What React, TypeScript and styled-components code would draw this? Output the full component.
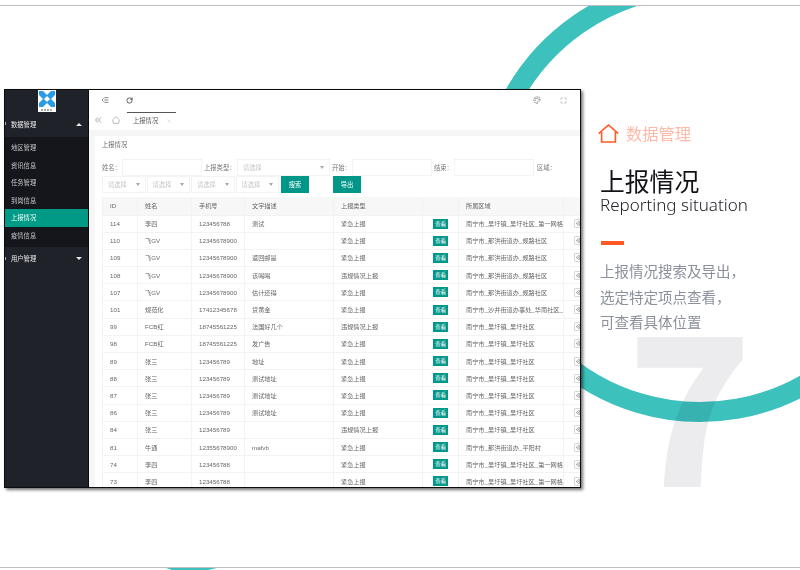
import React from "react";
import styled, { createGlobalStyle } from "styled-components";
import { ChevronsLeft, Eye, IndentDecrease, Maximize, Palette, RotateCw, X } from "lucide-react";

const Global = createGlobalStyle`
  html, body { margin: 0; padding: 0; background: #fff; }
  body { font-family: "Liberation Sans", "Noto Sans CJK SC", sans-serif; }
  * { box-sizing: border-box; }
`;

const Page = styled.div`
  width: 800px;
  height: 570px;
  overflow: hidden;
  padding-top: 5px;
`;

const Section = styled.section`
  position: relative;
  height: 563px;
  overflow: hidden;
  border-top: 1px solid #bdbdbd;
  border-bottom: 1px solid #bdbdbd;
  display: flex;
  align-items: flex-start;
`;

const Ring = styled.svg`
  position: absolute;
  left: 0;
  top: 0;
`;

const Seven = styled.div`
  position: absolute;
  left: 627px;
  top: 341px;
  font: 800 206px/100px "Noto Sans CJK SC", sans-serif;
  color: #ececef;
  mix-blend-mode: multiply;
`;

const Peek = styled.svg`
  display: block;
  margin-left: 166px;
`;

const Shot = styled.div`
  position: relative;
  flex: none;
  width: 577px;
  height: 399px;
  margin: 83px 0 0 4px;
  display: flex;
  overflow: hidden;
  border: 1px solid #0c0c0c;
  background: #fff;
  box-shadow: 2px 2px 3px rgba(0, 0, 0, 0.55);
  filter: blur(0.3px);
`;

const Sidebar = styled.aside`
  flex: none;
  width: 84px;
  background: #20222a;
  border-right: 1px solid #0a0a0a;
  font-size: 6.3px;
  color: #c9cacd;
`;

const LogoBox = styled.div`
  display: flex;
  justify-content: center;
  height: 24px;
  padding-left: 1px;
`;

const GroupRow = styled.div<{ $open?: boolean }>`
  position: relative;
  height: 23px;
  display: flex;
  align-items: center;
  justify-content: space-between;
  padding: 0 6px 0 6px;
  padding-bottom: ${(p) => (p.$open ? "3px" : "0")};
  color: #e9eaec;
  &::before {
    content: "";
    position: absolute;
    left: 0;
    top: ${(p) => (p.$open ? "8px" : "10px")};
    width: 1px;
    height: 3px;
    background: #aaa;
  }
`;

const Caret = styled.i<{ $up?: boolean }>`
  width: 0;
  height: 0;
  border-left: 3px solid transparent;
  border-right: 3px solid transparent;
  border-bottom: ${(p) => (p.$up ? "3px solid #e8e8e8" : "none")};
  border-top: ${(p) => (p.$up ? "none" : "3px solid #e8e8e8")};
`;

const SubMenu = styled.div`
  background: #15161b;
  padding: 2px 0;
`;

const SubItem = styled.div<{ $active?: boolean }>`
  height: 17.6px;
  line-height: 17.6px;
  padding-left: 6px;
  background: ${(p) => (p.$active ? "#009a86" : "transparent")};
  color: ${(p) => (p.$active ? "#fff" : "#c4c5c9")};
`;

const Main = styled.main`
  flex: 1;
  min-width: 0;
  display: flex;
  flex-direction: column;
  font-size: 6.3px;
  color: #666;
`;

const TopBar = styled.div`
  flex: none;
  height: 20px;
  display: flex;
  align-items: center;
  padding: 0 13px 0 12px;
  gap: 17px;
  color: #222;
`;

const TopRight = styled.div`
  margin-left: auto;
  display: flex;
  align-items: center;
  gap: 19px;
  color: #777;
`;

const TabBar = styled.div`
  flex: none;
  height: 20px;
  display: flex;
  align-items: center;
  color: #999;
`;

const TabIcon = styled.div<{ $dark?: boolean }>`
  width: 18px;
  display: flex;
  justify-content: center;
  color: ${(p) => (p.$dark ? "#555" : "#aaa")};
`;

const Tab = styled.div`
  height: 18px;
  width: 49px;
  margin: 2px 0 0 2px;
  padding: 0 4px 2px 6px;
  border-top: 1px solid #555;
  display: flex;
  align-items: center;
  justify-content: space-between;
  color: #555;
`;

const Body = styled.div`
  flex: 1;
  min-height: 0;
  background: #f6f6f6;
  padding: 6px 0 0 6px;
`;

const Card = styled.div`
  height: 100%;
  background: #fff;
  padding: 0 0 0 7px;
  overflow: hidden;
`;

const CardTitle = styled.div`
  height: 23px;
  padding: 4px 0 0 0;
  line-height: 10px;
  color: #666;
`;

const FilterRow = styled.div`
  display: flex;
  align-items: center;
  height: 17px;
  color: #777;
`;

const Label = styled.span<{ $w: number; $pad?: number }>`
  width: ${(p) => p.$w}px;
  padding-left: ${(p) => p.$pad ?? 0}px;
  flex: none;
  white-space: nowrap;
`;

const Input = styled.div<{ $w: number }>`
  flex: none;
  width: ${(p) => p.$w}px;
  height: 17px;
  border: 1px solid #f3f3f3;
  background: #fff;
`;

const Select = styled.div<{ $w: number; $gap?: number }>`
  flex: none;
  width: ${(p) => p.$w}px;
  height: 17px;
  margin-left: ${(p) => p.$gap ?? 0}px;
  border: 1px solid #f3f3f3;
  display: flex;
  align-items: center;
  justify-content: space-between;
  padding: 0 5px;
  color: #c6c6c6;
  &::after {
    content: "";
    border-left: 2.5px solid transparent;
    border-right: 2.5px solid transparent;
    border-top: 3px solid #a8a8a8;
  }
`;

const ActionButton = styled.div<{ $gap: number }>`
  flex: none;
  width: 28px;
  height: 17px;
  margin-left: ${(p) => p.$gap}px;
  background: #009688;
  color: #fff;
  display: flex;
  align-items: center;
  justify-content: center;
`;

const Table = styled.table`
  margin-top: 4px;
  table-layout: fixed;
  width: 488px;
  border-collapse: collapse;
  font-size: 6.2px;
  color: #666;
`;

const HeadCell = styled.th`
  height: 18px;
  padding: 0 0 0 7px;
  text-align: left;
  font-weight: 400;
  background: #f7f7f7;
  border: 1px solid #f2f2f2;
  border-top: none;
  white-space: nowrap;
`;

const Cell = styled.td`
  height: 17.2px;
  padding: 0 0 0 7px;
  border: 1px solid #f3f3f3;
  white-space: nowrap;
  overflow: hidden;
`;

const TagCell = styled(Cell)`
  padding: 0;
  text-align: center;
`;

const EyeCell = styled(Cell)`
  padding: 0 0 0 10px;
  border-left-color: #e6e6e6;
`;

const ViewTag = styled.span`
  display: inline-block;
  width: 15px;
  height: 10px;
  line-height: 10px;
  background: #009688;
  color: #fff;
  font-size: 5.6px;
  text-align: center;
  vertical-align: middle;
`;

const EyeBox = styled.span`
  display: inline-flex;
  align-items: center;
  padding-left: 1px;
  width: 16px;
  height: 9px;
  border: 1px solid #d8d8d8;
  border-radius: 1px;
  color: #555;
  vertical-align: middle;
`;

const Side = styled.div`
  position: relative;
  flex: 1;
  padding: 116px 0 0 19px;
`;

const Eyebrow = styled.div`
  display: flex;
  align-items: center;
  gap: 7px;
  height: 22px;
  margin-left: -2px;
  color: #ffb9a8;
  font: 400 16.25px/22px "Noto Sans CJK SC", sans-serif;
`;

const Title = styled.h1`
  margin: 22px 0 0;
  font: 400 24.8px/28px "Noto Sans CJK SC", sans-serif;
  color: #111317;
`;

const Subtitle = styled.div`
  margin-top: 2px;
  font: 300 17px/18px "Noto Sans", sans-serif;
  color: #212328;
  white-space: nowrap;
`;

const Bar = styled.div`
  width: 23px;
  height: 4px;
  margin: 27px 0 0 1px;
  background: #ff5a26;
`;

const Para = styled.p`
  margin: 13px 0 0;
  font: 400 14.5px/25.5px "Noto Sans CJK SC", sans-serif;
  color: #8b909c;
  white-space: nowrap;
`;

type Row = [string, string, string, string, string, string];
const WY = "南宁市_吴圩镇_吴圩社区";
const WYG = "南宁市_吴圩镇_吴圩社区_第一网格";
const NH = "南宁市_那洪街道办_规路社区";
const U = "紧急上报";
const V = "违规情况上报";
const rows: Row[] = [
  ["114", "李四", "123456788", "测试", U, WYG],
  ["110", "飞GV", "12345678900", "", U, NH],
  ["109", "飞GV", "12345678900", "返回邮是", U, NH],
  ["108", "飞GV", "12345678900", "该喝喝", V, NH],
  ["107", "飞GV", "12345678900", "估计还得", U, NH],
  ["101", "规范化", "17412345678", "贷黄金", U, "南宁市_沙井街道办事处_华南社区_第"],
  ["99", "FCB红", "18745561225", "法国好几个", V, WY],
  ["98", "FCB红", "18745561225", "发广告", U, WY],
  ["89", "张三", "123456789", "地址", U, WY],
  ["88", "张三", "123456789", "测试地址", U, WY],
  ["87", "张三", "123456789", "测试地址", U, WY],
  ["86", "张三", "123456789", "测试地址", U, WY],
  ["84", "张三", "123456789", "", V, WY],
  ["81", "牛通", "12355678900", "mafvb", U, "南宁市_那洪街道办_平阳村"],
  ["74", "李四", "123456788", "", U, WYG],
  ["73", "李四", "123456788", "", U, WYG],
];
const cols = [35, 54, 53, 89, 89, 36, 105, 27];
const heads = ["ID", "姓名", "手机号", "文字描述", "上报类型", "", "所属区域", ""];

const Logo = () => (
  <svg width="18" height="22" viewBox="0 0 18 22">
    <rect width="18" height="22" fill="#fff" />
    <path d="M1 1h4l4 4 4-4h4v4l-4 4 4 4v4h-4l-4-4-4 4H1v-4l4-4-4-4z" fill="#2c9be6" />
    <path d="M9 6 12 9 9 12 6 9z" fill="#fff" />
    <path d="M6 1 9 4l3-3M6 17l3-3 3 3M1 6l3 3-3 3M17 6l-3 3 3 3" stroke="#fff" strokeWidth=".7" fill="none" />
    <path d="M3 20h12" stroke="#555" strokeWidth="1.2" strokeDasharray="2 1" />
  </svg>
);

const HouseIcon = () => (
  <svg width="21" height="19" viewBox="0 0 21 19" fill="none" stroke="#ff5a26" strokeWidth="1.6">
    <path d="M.7 9.6 10.5 1l9.8 8.6" />
    <path d="M3.6 8v10h13.8V8" />
  </svg>
);

const TabHome = () => (
  <svg width="8" height="8" viewBox="0 0 8 8" fill="none" stroke="currentColor" strokeWidth=".8">
    <path d="M.6 3.8 4 .6l3.4 3.2-.9 3.6h-5z" />
  </svg>
);

export default function App() {
  return (
    <Page>
      <Global />
      <Section>
        <Ring width="800" height="561" viewBox="0 0 800 561" fill="none">
          <path d="M660-16.2A213 213 0 1 0 820 369" stroke="#3cc1bd" strokeWidth="20" />
        </Ring>
        <Shot>
          <Sidebar>
            <LogoBox>
              <Logo />
            </LogoBox>
            <GroupRow $open>
              数据管理
              <Caret $up />
            </GroupRow>
            <SubMenu>
              <SubItem>地区管理</SubItem>
              <SubItem>资讯信息</SubItem>
              <SubItem>任务管理</SubItem>
              <SubItem>到岗信息</SubItem>
              <SubItem $active>上报情况</SubItem>
              <SubItem>疫情信息</SubItem>
            </SubMenu>
            <GroupRow>
              用户管理
              <Caret />
            </GroupRow>
          </Sidebar>
          <Main>
            <TopBar>
              <IndentDecrease size={8} strokeWidth={1.6} />
              <RotateCw size={7} strokeWidth={2.4} />
              <TopRight>
                <Palette size={8} strokeWidth={1.6} />
                <Maximize size={7} strokeWidth={1.5} />
              </TopRight>
            </TopBar>
            <TabBar>
              <TabIcon $dark>
                <ChevronsLeft size={10} strokeWidth={1.4} />
              </TabIcon>
              <TabIcon>
                <TabHome />
              </TabIcon>
              <Tab>
                上报情况
                <X size={6} strokeWidth={1} color="#aaa" />
              </Tab>
            </TabBar>
            <Body>
              <Card>
                <CardTitle>上报情况</CardTitle>
                <FilterRow>
                  <Label $w={20}>姓名：</Label>
                  <Input $w={80} />
                  <Label $w={35} $pad={2}>上报类型：</Label>
                  <Select $w={93}>请选择</Select>
                  <Label $w={22} $pad={2}>开始：</Label>
                  <Input $w={80} />
                  <Label $w={22} $pad={2}>结束：</Label>
                  <Input $w={80} />
                  <Label $w={22} $pad={3}>区域：</Label>
                </FilterRow>
                <FilterRow>
                  <Select $w={43.5}>请选择</Select>
                  <Select $w={43.5} $gap={1}>请选择</Select>
                  <Select $w={43.5} $gap={1}>请选择</Select>
                  <Select $w={43.5} $gap={1}>请选择</Select>
                  <ActionButton $gap={2}>搜索</ActionButton>
                  <ActionButton $gap={24}>导出</ActionButton>
                </FilterRow>
                <Table>
                  <colgroup>
                    {cols.map((w, i) => (
                      <col key={i} width={w} />
                    ))}
                  </colgroup>
                  <thead>
                    <tr>
                      {heads.map((h, i) => (
                        <HeadCell key={i}>{h}</HeadCell>
                      ))}
                    </tr>
                  </thead>
                  <tbody>
                    {rows.map((r) => (
                      <tr key={r[0]}>
                        <Cell>{r[0]}</Cell>
                        <Cell>{r[1]}</Cell>
                        <Cell>{r[2]}</Cell>
                        <Cell>{r[3]}</Cell>
                        <Cell>{r[4]}</Cell>
                        <TagCell>
                          <ViewTag>查看</ViewTag>
                        </TagCell>
                        <Cell>{r[5]}</Cell>
                        <EyeCell>
                          <EyeBox>
                            <Eye size={7} strokeWidth={1.6} />
                          </EyeBox>
                        </EyeCell>
                      </tr>
                    ))}
                  </tbody>
                </Table>
              </Card>
            </Body>
          </Main>
        </Shot>
        <Side>
          <Eyebrow>
            <HouseIcon />
            数据管理
          </Eyebrow>
          <Title>上报情况</Title>
          <Subtitle>Reporting situation</Subtitle>
          <Bar />
          <Para>
            上报情况搜索及导出，
            <br />
            选定特定项点查看，
            <br />
            可查看具体位置
          </Para>
        </Side>
        <Seven>7</Seven>
      </Section>
      <Peek width="51" height="2" viewBox="0 0 51 2">
        <path d="M0 0h51l-9 2H6z" fill="#3cc1bd" />
      </Peek>
    </Page>
  );
}
